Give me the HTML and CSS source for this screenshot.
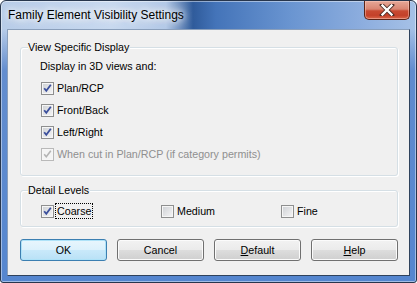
FILE: index.html
```html
<!DOCTYPE html>
<html>
<head>
<title>Family Element Visibility Settings</title>
<link rel="stylesheet" href="styles.css">
</head>
<body>

    <div class="window">
        <div class="titlebar">
            <span class="title">Family Element Visibility Settings</span>
            <span class="close">
                <svg width="16" height="12" viewBox="0 0 16 12">
                    <path d="M3 1 L13 11 M13 1 L3 11" stroke="#4a2a24" stroke-width="4" stroke-linecap="square"/>
                    <path d="M3.5 1.5 L12.5 10.5 M12.5 1.5 L3.5 10.5" stroke="#ffffff" stroke-width="2.4" stroke-linecap="square"/>
                </svg>
            </span>
        </div>

        <div class="client">
            <fieldset class="group view">
                <legend>View Specific Display</legend>
                <div class="row">Display in 3D views and:</div>
                <div class="row check-row">
                    <span class="box"><svg width="11" height="11" viewBox="0 0 11 11"><path d="M2.2 5.2 L4.3 7.8 L8.8 1.8" fill="none" stroke="#3b4f9c" stroke-width="1.8"/></svg></span>
                    <span class="lbl">Plan/RCP</span>
                </div>
                <div class="row check-row">
                    <span class="box"><svg width="11" height="11" viewBox="0 0 11 11"><path d="M2.2 5.2 L4.3 7.8 L8.8 1.8" fill="none" stroke="#3b4f9c" stroke-width="1.8"/></svg></span>
                    <span class="lbl">Front/Back</span>
                </div>
                <div class="row check-row">
                    <span class="box"><svg width="11" height="11" viewBox="0 0 11 11"><path d="M2.2 5.2 L4.3 7.8 L8.8 1.8" fill="none" stroke="#3b4f9c" stroke-width="1.8"/></svg></span>
                    <span class="lbl">Left/Right</span>
                </div>
                <div class="row check-row disabled">
                    <span class="box"><svg width="11" height="11" viewBox="0 0 11 11"><path d="M2.2 5.2 L4.3 7.8 L8.8 1.8" fill="none" stroke="#b4b4b4" stroke-width="1.6"/></svg></span>
                    <span class="lbl">When cut in Plan/RCP (if category permits)</span>
                </div>
            </fieldset>

            <fieldset class="group levels">
                <legend>Detail Levels</legend>
                <div class="level-grid">
                    <div class="row check-row">
                        <span class="box"><svg width="11" height="11" viewBox="0 0 11 11"><path d="M2.2 5.2 L4.3 7.8 L8.8 1.8" fill="none" stroke="#3b4f9c" stroke-width="1.8"/></svg></span>
                        <span class="lbl focus">Coarse</span>
                    </div>
                    <div class="row check-row">
                        <span class="box"></span>
                        <span class="lbl">Medium</span>
                    </div>
                    <div class="row check-row">
                        <span class="box"></span>
                        <span class="lbl">Fine</span>
                    </div>
                </div>
            </fieldset>

            <div class="buttons">
                <button class="btn default">OK</button>
                <button class="btn">Cancel</button>
                <button class="btn"><u>D</u>efault</button>
                <button class="btn"><u>H</u>elp</button>
            </div>
        </div>
    </div>

</body>
</html>
```

FILE: styles.css
```css
    body {
        margin: 0;
        font-family: 'Liberation Sans', Arial, sans-serif;
        font-size: 10.7px;
        color: #000;
    }

    .window {
        width: 417px;
        height: 283px;
        box-sizing: border-box;
        border: 1px solid #27364d;
        border-radius: 6px 6px 3px 3px;
        padding: 0 6px 6px;
        display: flex;
        flex-direction: column;
        background:
            linear-gradient(to bottom, rgba(84, 130, 202, 0) 28px, rgba(84, 130, 202, 0.85) 70px, #5586cf 100%),
            linear-gradient(to right, #b7cce8 0, #c8d9ef 110px, #b3c9e7 165px, #2f5b9b 192px, #4474b9 215px, #6a95d1 290px, #8cadde 360px, #a7c2e7 417px);
        box-shadow: inset 0 0 0 1px rgba(255, 255, 255, 0.45);
    }

    .titlebar {
        height: 28px;
        display: flex;
        justify-content: space-between;
        align-items: flex-start;
    }

    .title {
        font-size: 12px;
        line-height: 16px;
        padding: 6px 0 0 1px;
        color: #000;
        text-shadow: 0 0 6px #fff, 0 0 10px #fff, 0 0 14px #eef4fb;
    }

    .close {
        width: 46px;
        height: 19px;
        box-sizing: border-box;
        border: 1px solid #5a2418;
        border-top: 0;
        border-radius: 0 0 5px 5px;
        background: linear-gradient(to bottom, #e6a898 0, #d98572 45%, #c84a32 55%, #c4412a 80%, #d8664a 100%);
        box-shadow: inset 0 0 0 1px rgba(255, 210, 200, 0.45);
        display: flex;
        align-items: center;
        justify-content: center;
    }

    .close svg {
        display: block;
    }

    .client {
        flex: 1;
        background-color: #f0f0f0;
        border: 1px solid #2f425c;
        border-top-color: #8a9fbb;
        border-left-color: #8a9fbb;
        padding: 10px 0 0;
    }

    .group {
        margin: 0 11px 0 12px;
        padding: 1px 0 10px 7px;
        border: 1px solid #d5dfe5;
        border-radius: 3px;
        box-shadow: inset 1px 1px 0 #fff, 1px 1px 0 #fff;
    }

    .group legend {
        padding: 0 1px 0 0;
        line-height: 14px;
        background-color: #f0f0f0;
    }

    .levels {
        margin-top: 7px;
        padding: 3px 0 4px 7px;
    }

    .row {
        height: 22px;
        display: flex;
        align-items: center;
        padding-left: 12px;
        line-height: 14px;
    }

    .check-row {
        padding-left: 13px;
    }

    .box {
        width: 13px;
        height: 13px;
        box-sizing: border-box;
        border: 1px solid #8e8f8f;
        background: linear-gradient(135deg, #cdd0d4 0, #e6e7e9 60%, #f6f6f7 100%);
        box-shadow: inset 0 0 0 1px #f6f6f6;
        flex: none;
    }

    .box svg {
        display: block;
    }

    .lbl {
        margin-left: 2px;
        border: 1px solid transparent;
        padding: 0;
    }

    .lbl.focus {
        margin-left: 1px;
        padding: 0 1px;
        border: 1px dotted #000;
    }

    .disabled .lbl {
        color: #8f8f8f;
    }

    .disabled .box {
        border-color: #b9b9b9;
        background: #f4f4f4;
    }

    .level-grid {
        display: grid;
        grid-template-columns: 120px 120px 120px;
    }

    .buttons {
        margin: 12px 11px 0 12px;
        display: flex;
        justify-content: space-between;
    }

    .btn {
        width: 87px;
        height: 22px;
        box-sizing: border-box;
        border: 1px solid #707070;
        border-radius: 3px;
        font-family: 'Liberation Sans', Arial, sans-serif;
        font-size: 10.7px;
        color: #000;
        padding: 0;
        background: linear-gradient(to bottom, #f2f2f2 0, #ebebeb 48%, #dddddd 52%, #cfcfcf 100%);
        box-shadow: inset 0 0 0 1px #fbfbfb;
    }

    .btn.default {
        border-color: #3c7fb1;
        background: linear-gradient(to bottom, #e8f6fd 0, #dcf1fc 48%, #c9e9fa 52%, #b9e1f6 100%);
        box-shadow: inset 0 0 0 1px #aee2f8;
    }
```
